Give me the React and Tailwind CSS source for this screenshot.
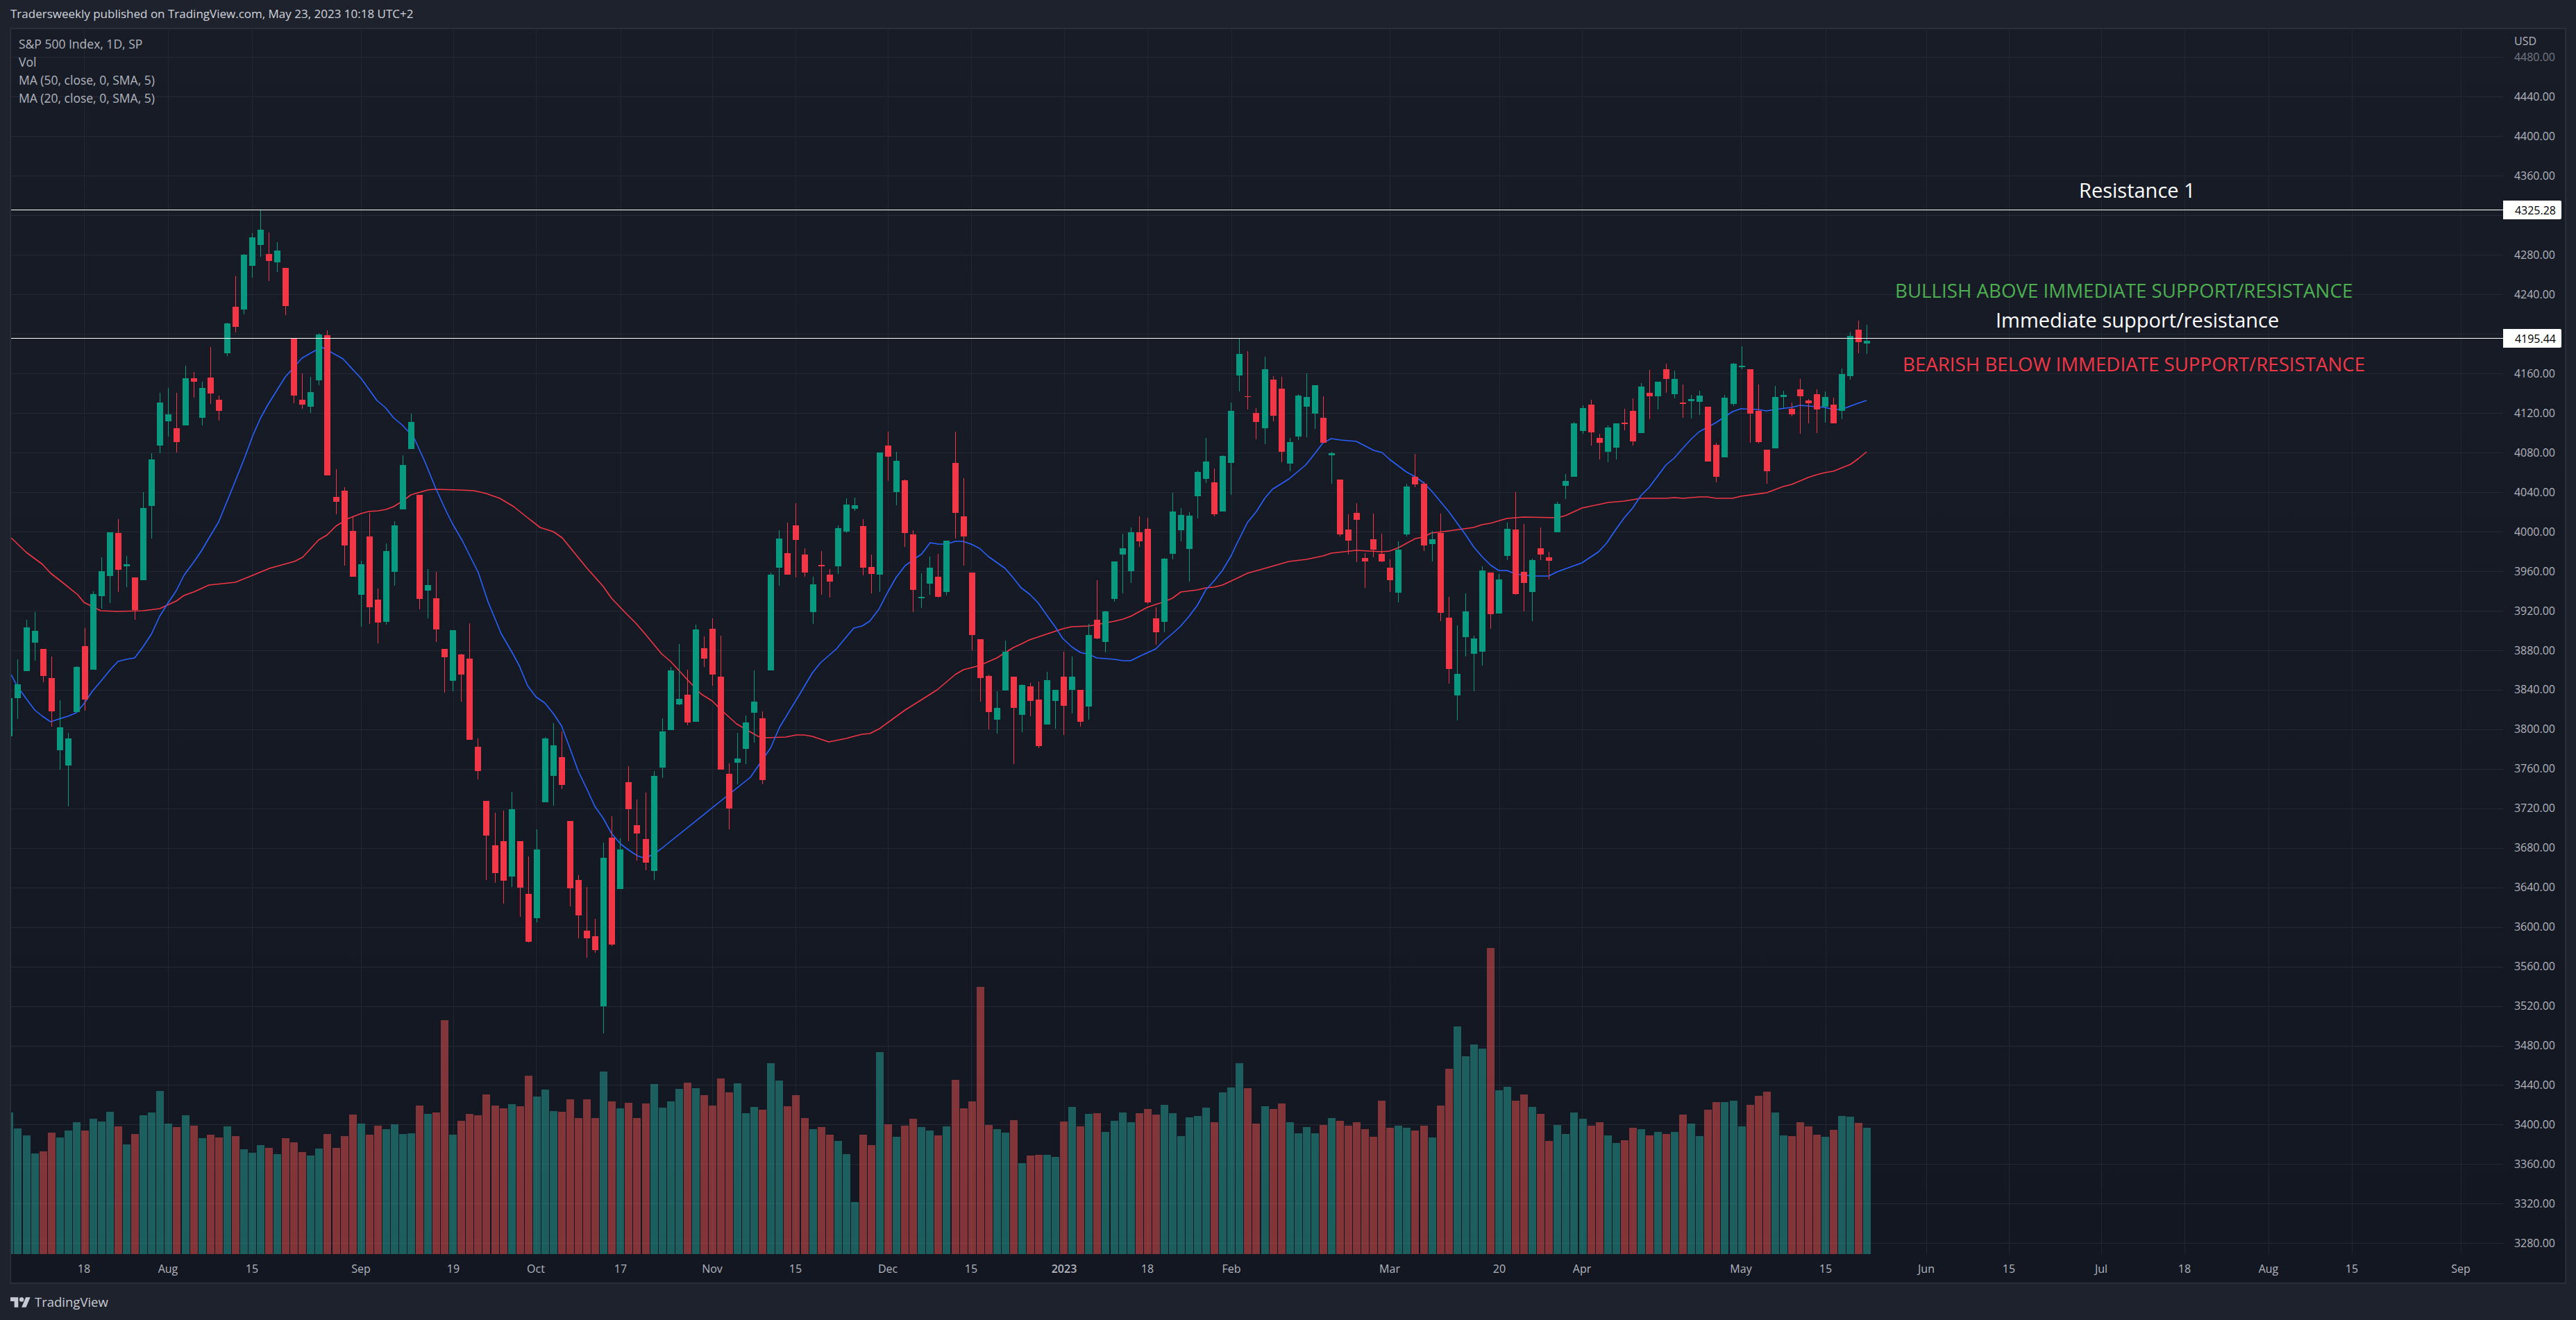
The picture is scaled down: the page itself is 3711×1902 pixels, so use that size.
import React from "react";

// [up, bodyTop, bodyBottom, wickTop, wickBottom, volumeTop] in page pixels
const CANDLES = [
  [1,1006,1061,1006,1061,1603],[1,986,1006,950,1036,1626],[1,904,967,893,967,1636],[1,909,926,882,952,1662],[0,935,974,935,983,1659],
  [0,977,1025,946,1047,1632],[1,1048,1081,1009,1109,1639],[1,1064,1103,1056,1162,1629],[1,961,1026,960,1026,1617],[0,931,1008,905,1024,1629],
  [1,856,965,852,965,1612],[1,823,859,803,877,1616],[1,767,830,767,869,1602],[0,768,821,748,853,1623],[1,813,816,801,846,1649],
  [0,832,879,832,893,1634],[1,732,836,709,836,1607],[1,662,729,653,776,1603],[1,580,642,566,653,1572],[1,597,607,559,629,1619],
  [0,617,637,566,652,1624],[1,545,613,527,613,1607],[0,545,550,536,573,1622],[1,559,602,550,613,1640],[0,544,567,500,582,1635],
  [0,576,592,570,606,1639],[1,466,509,465,513,1623],[0,442,471,398,479,1637],[1,367,446,366,453,1656],[1,342,383,336,400,1661],
  [1,331,353,302,370,1650],[0,366,376,335,405,1654],[1,361,378,349,392,1663],[0,386,441,386,454,1640],[0,488,570,488,581,1646],
  [0,576,583,538,589,1660],[1,565,586,543,595,1665],[1,482,548,480,555,1655],[0,483,685,476,685,1634],[0,716,723,676,741,1654],
  [0,707,786,702,815,1637],[0,765,831,745,831,1606],[1,813,857,808,903,1619],[0,773,875,739,899,1635],[0,864,897,848,927,1622],
  [1,794,896,783,900,1627],[1,757,824,751,844,1620],[1,670,734,656,734,1634],[1,608,647,596,647,1633],[0,713,863,713,878,1593],
  [1,843,851,820,891,1605],[0,862,907,824,925,1603],[0,935,947,935,998,1470],[1,908,981,908,996,1635],[0,943,972,942,1011,1615],
  [0,949,1066,898,1066,1605],[0,1076,1111,1064,1123,1607],[0,1154,1204,1154,1268,1577],[0,1218,1258,1171,1272,1593],[0,1212,1269,1168,1302,1597],
  [1,1166,1263,1141,1278,1591],[0,1212,1279,1212,1321,1594],[0,1288,1357,1234,1358,1550],[1,1224,1323,1195,1329,1580],[1,1064,1156,1062,1156,1570],
  [1,1074,1118,1042,1161,1601],[0,1091,1131,1054,1137,1602],[0,1183,1280,1183,1306,1584],[0,1268,1319,1261,1352,1611],[0,1341,1352,1278,1380,1584],
  [0,1349,1369,1324,1373,1611],[1,1236,1450,1214,1489,1544],[0,1207,1361,1176,1363,1587],[1,1224,1281,1208,1281,1597],[0,1127,1166,1104,1212,1589],
  [0,1189,1201,1152,1240,1611],[0,1209,1243,1142,1254,1590],[1,1118,1255,1111,1268,1562],[1,1054,1106,1035,1121,1596],[1,966,1052,961,1052,1587],
  [1,1007,1015,928,1016,1569],[0,1001,1041,965,1045,1560],[1,907,1040,900,1040,1568],[0,934,949,917,961,1578],[0,906,972,891,988,1593],
  [0,975,1109,916,1109,1554],[0,1115,1165,1100,1195,1574],[1,1093,1099,1056,1130,1561],[1,1041,1079,1031,1101,1604],[1,1011,1027,966,1070,1595],
  [0,1035,1124,1025,1130,1599],[1,828,966,825,966,1532],[1,776,818,764,844,1557],[0,797,828,753,828,1594],[0,757,778,725,832,1578],
  [0,799,825,790,831,1611],[1,842,882,831,899,1627],[0,814,816,794,857,1624],[0,828,838,820,861,1635],[1,761,816,757,827,1644],
  [1,727,766,718,768,1663],[1,728,733,717,736,1732],[0,758,818,748,829,1635],[0,817,827,799,855,1650],[1,652,828,652,853,1516],
  [0,642,658,622,693,1620],[1,664,709,651,728,1638],[0,692,768,691,788,1622],[0,770,850,764,882,1612],[1,860,862,826,876,1624],
  [1,818,841,802,857,1629],[0,831,860,798,861,1636],[1,779,853,779,858,1623],[0,667,739,622,776,1556],[0,744,773,689,815,1597],
  [0,825,915,825,937,1587],[0,921,977,921,1011,1422],[0,974,1026,972,1051,1621],[1,1020,1037,996,1057,1627],[1,939,995,923,995,1632],
  [0,975,1020,975,1101,1614],[1,987,1030,986,1055,1676],[0,989,1010,984,1032,1665],[0,1008,1075,982,1078,1664],[1,980,1044,968,1044,1664],
  [1,994,1010,994,1050,1667],[0,975,1017,939,1059,1616],[1,975,994,946,1028,1595],[0,994,1040,994,1047,1623],[1,915,1018,899,1037,1605],
  [0,893,920,836,921,1604],[1,881,925,880,940,1631],[1,809,863,809,867,1615],[1,790,799,769,855,1603],[1,767,823,760,840,1617],
  [0,767,780,744,788,1604],[0,762,868,746,870,1598],[0,891,911,875,929,1606],[1,805,896,804,911,1592],[1,737,798,710,806,1604],
  [1,742,764,732,780,1637],[1,743,791,738,838,1610],[1,680,715,678,747,1608],[1,665,690,631,696,1596],[0,695,741,675,744,1617],
  [1,657,737,656,737,1574],[1,592,667,580,713,1567],[1,510,541,488,564,1532],[0,571,572,506,590,1568],[0,595,608,588,633,1619],
  [1,532,617,514,640,1594],[0,547,599,542,607,1598],[0,560,651,543,666,1590],[1,637,668,631,679,1617],[1,570,629,568,634,1633],
  [1,572,586,538,630,1624],[1,555,596,555,618,1633],[0,602,638,571,638,1621],[1,653,656,651,697,1611],[0,691,770,691,773,1615],
  [0,763,779,741,799,1622],[0,739,749,725,810,1617],[0,804,809,797,847,1627],[0,777,792,740,803,1638],[0,798,809,769,810,1586],
  [0,818,836,806,853,1625],[1,792,854,780,868,1622],[1,701,770,697,773,1625],[0,687,698,654,702,1629],[0,697,786,694,794,1622],
  [1,777,784,765,809,1639],[0,768,883,740,895,1593],[0,890,964,860,985,1540],[1,971,1002,901,1038,1479],[1,881,918,855,946,1522],
  [1,920,942,916,996,1505],[1,822,939,816,959,1511],[0,825,885,825,906,1366],[1,835,884,827,884,1571],[1,762,801,753,807,1566],
  [0,763,856,709,857,1586],[0,824,840,755,881,1577],[1,807,853,805,895,1595],[0,790,799,760,807,1605],[0,803,808,795,835,1644],
  [1,726,767,723,767,1621],[1,693,700,683,719,1634],[1,610,687,608,687,1603],[1,588,621,584,625,1612],[0,583,623,576,642,1622],
  [0,631,638,625,662,1617],[1,616,651,613,666,1636],[1,610,645,610,662,1647],[0,609,611,589,620,1643],[0,592,636,574,642,1625],
  [1,557,624,552,624,1627],[0,566,571,533,604,1636],[1,550,571,550,590,1631],[0,532,546,524,566,1634],[1,546,568,534,574,1631],
  [0,580,582,554,602,1606],[1,575,578,569,603,1619],[1,570,579,563,598,1637],[0,586,665,586,665,1599],[0,641,687,638,695,1588],
  [1,573,659,569,659,1588],[1,524,582,523,585,1586],[1,527,529,499,532,1623],[0,532,596,532,638,1592],[0,592,637,554,639,1579],
  [0,648,679,648,697,1573],[1,572,646,556,646,1603],[1,569,572,563,588,1636],[0,589,597,580,600,1637],[0,561,571,546,625,1617],
  [0,577,581,575,610,1623],[0,568,590,561,624,1635],[1,572,586,564,609,1638],[0,583,610,573,610,1628],[1,539,592,531,604,1608],
  [1,484,542,478,547,1609],[0,475,493,462,509,1618],[1,491,495,468,510,1625],
];

const MA20 = "16,972 25,989 38,1007 50,1023 61,1032 73,1040 85,1036 98,1032 110,1027 121,1014 133,996 145,982 158,966 170,953 182,950 194,948 206,932 218,914 230,888 242,869 254,851 265,829 279,810 290,794 300,777 315,752 335,703 353,658 364,628 375,603 386,583 411,543 435,516 463,500 476,507 494,517 520,545 543,577 555,587 567,602 579,612 596,630 612,665 627,702 643,737 652,755 666,779 689,825 703,867 722,913 736,937 748,959 760,988 772,1004 785,1013 797,1028 809,1046 821,1078 833,1111 845,1136 857,1162 869,1179 881,1201 894,1216 906,1225 918,1233 930,1237 950,1225 1081,1120 1110,1078 1123,1048 1154,997 1170,970 1182,955 1205,935 1219,918 1230,905 1242,902 1253,895 1266,878 1279,853 1291,832 1304,815 1328,798 1340,782 1352,784 1364,784 1376,780 1387,780 1399,784 1411,790 1424,802 1448,819 1460,833 1471,847 1483,856 1495,868 1507,885 1520,903 1531,920 1544,932 1556,940 1569,943 1580,948 1605,950 1618,952 1629,952 1641,946 1665,935 1677,923 1689,913 1701,902 1713,888 1725,872 1737,850 1749,837 1761,822 1774,800 1780,787 1797,753 1810,737 1822,718 1833,705 1857,690 1881,670 1893,655 1906,638 1918,632 1931,634 1954,636 1979,649 1991,652 2002,662 2026,680 2039,687 2050,695 2062,707 2087,737 2111,770 2123,788 2135,802 2147,814 2159,822 2171,822 2183,827 2207,830 2231,830 2243,824 2279,811 2291,803 2303,795 2315,782 2327,764 2340,746 2352,732 2364,714 2376,702 2388,686 2400,670 2412,660 2425,645 2437,632 2448,622 2472,609 2484,601 2496,593 2508,589 2532,590 2545,592 2557,590 2581,587 2593,584 2605,585 2629,587 2641,590 2653,590 2666,585 2677,581 2689,577";

const MA50 = "16,775 38,796 61,813 73,826 91,840 112,857 121,868 145,880 170,881 206,880 230,877 254,866 265,858 279,853 301,843 339,839 364,829 388,819 424,809 436,803 459,778 471,771 484,758 502,747 520,740 531,737 545,736 556,734 567,730 580,722 592,713 616,706 627,705 661,706 683,707 700,711 720,718 740,730 760,746 778,760 797,766 810,775 845,818 869,845 881,862 900,882 916,898 929,913 953,942 966,953 989,978 1010,1000 1026,1010 1038,1022 1061,1043 1092,1061 1104,1063 1132,1062 1147,1059 1158,1059 1170,1061 1194,1069 1219,1064 1230,1061 1242,1058 1253,1057 1267,1050 1304,1023 1328,1008 1350,994 1376,972 1388,965 1411,959 1436,948 1460,933 1471,928 1483,922 1495,918 1531,906 1544,903 1569,902 1606,895 1618,892 1629,888 1653,875 1677,867 1689,862 1701,853 1725,850 1737,847 1749,846 1761,843 1774,837 1797,826 1822,819 1857,809 1882,806 1906,801 1918,797 1954,793 1991,795 2002,794 2015,789 2039,776 2050,774 2062,768 2087,765 2123,760 2135,756 2147,754 2171,747 2195,745 2243,746 2255,743 2279,732 2317,724 2340,722 2364,718 2400,718 2412,717 2425,718 2448,716 2460,716 2472,718 2496,718 2508,715 2545,710 2569,701 2581,698 2605,688 2617,684 2629,681 2641,679 2666,669 2677,661 2689,651";

const TICKS = [
  [121, "18"], [242, "Aug"], [363, "15"], [520, "Sep"], [653, "19"], [772, "Oct"], [894, "17"],
  [1026, "Nov"], [1146, "15"], [1279, "Dec"], [1399, "15"], [1533, "2023"], [1653, "18"], [1774, "Feb"],
  [2002, "Mar"], [2160, "20"], [2279, "Apr"], [2508, "May"], [2630, "15"], [2775, "Jun"], [2894, "15"],
  [3027, "Jul"], [3147, "18"], [3268, "Aug"], [3388, "15"], [3545, "Sep"],
];

const PRICES = Array.from({ length: 31 }, (_, i) => (4480 - i * 40).toFixed(2));

function PriceChart() {
  return (
    <svg className="absolute inset-0" width="3590" height="1765" viewBox="16 42 3590 1765" shapeRendering="crispEdges">
      {PRICES.map((p, i) => {
        const y = Math.round(82 + i * 56.98);
        return <rect key={p} x="16" y={y} width="3590" height="1" fill="#252934" />;
      })}
      {TICKS.map(([x, t]) => (
        <rect key={x} x={x} y="42" width="1" height="1765" fill="#22262f" />
      ))}
      {CANDLES.map((c, i) => {
        const x = Math.round(13.4 + 12.054 * i);
        return (
          <rect key={i} x={x - 5} y={c[5]} width="11" height={1807 - c[5]} fill={c[0] ? "#26a69a" : "#ef5350"} fillOpacity="0.5" />
        );
      })}
      <polyline points={MA50} fill="none" stroke="#f23645" strokeWidth="1.6" strokeLinejoin="round" shapeRendering="auto" />
      <polyline points={MA20} fill="none" stroke="#2962ff" strokeWidth="1.6" strokeLinejoin="round" shapeRendering="auto" />
      {CANDLES.map((c, i) => {
        const x = Math.round(13.4 + 12.054 * i);
        const color = c[0] ? "#089981" : "#f23645";
        return (
          <g key={i} fill={color}>
            <rect x={x} y={c[3]} width="1" height={c[4] - c[3]} />
            <rect x={x - 4} y={c[1]} width="9" height={c[2] - c[1]} />
          </g>
        );
      })}
      <rect x="16" y="302" width="3590" height="1" fill="#ffffff" />
      <rect x="16" y="487" width="3590" height="1" fill="#ffffff" />
    </svg>
  );
}

function Note({ className, children }) {
  return <div className={"absolute leading-[40px] whitespace-nowrap -translate-y-1/2 " + className}>{children}</div>;
}

function PriceTag({ className, children }) {
  return (
    <div className={"absolute left-0 w-[84px] h-[27px] bg-white text-black rounded-r-[2px] flex items-center justify-end pr-[8px] text-[16px] " + className}>
      {children}
    </div>
  );
}

export default function App() {
  return (
    <div className="w-[3711px] h-[1902px] flex flex-col bg-[#1e222d] font-['Open_Sans',sans-serif] overflow-hidden">
      <div className="h-[40px] flex items-center pl-[15px] text-[17px] text-[#d1d4dc]">
        Tradersweekly published on TradingView.com, May 23, 2023 10:18 UTC+2
      </div>

      <div className="ml-[14px] w-[3683px] h-[1810px] flex flex-col border-2 border-[#2a2e39] bg-linear-to-b from-[#181c27] to-[#131722]">
        <div className="flex h-[1765px]">
          <div className="relative w-[3590px]">
            <PriceChart />
            <div className="absolute left-[11px] top-[8px] flex flex-col text-[17.5px] leading-[26px] text-[#b2b5be]">
              <span>S&amp;P 500 Index, 1D, SP</span>
              <span>Vol</span>
              <span>MA (50, close, 0, SMA, 5)</span>
              <span>MA (20, close, 0, SMA, 5)</span>
            </div>
            <Note className="left-[2979px] top-[232px] text-[29px] text-white">Resistance 1</Note>
            <Note className="left-[2714px] top-[376px] text-[27.7px] text-[#4caf50]">BULLISH ABOVE IMMEDIATE SUPPORT/RESISTANCE</Note>
            <Note className="left-[2859px] top-[419px] text-[29px] text-white">Immediate support/resistance</Note>
            <Note className="left-[2725px] top-[482px] text-[27.7px] text-[#f23645]">BEARISH BELOW IMMEDIATE SUPPORT/RESISTANCE</Note>
          </div>

          <div className="relative flex-1 pt-[11.5px] flex flex-col text-[16px] text-[#b2b5be]">
            <span className="absolute left-[16px] top-[4px] leading-[26px]">USD</span>
            {PRICES.map((p, i) => (
              <div key={p} className={"h-[56.98px] shrink-0 flex items-center justify-end pr-[14px] " + (i === 0 ? "opacity-60" : "")}>
                {p}
              </div>
            ))}
            <PriceTag className="top-[247px]">4325.28</PriceTag>
            <PriceTag className="top-[432px]">4195.44</PriceTag>
          </div>
        </div>

        <div className="flex-1 flex items-center text-[16px] text-[#b2b5be]">
          {TICKS.map(([x, t], i) => (
            <div
              key={x}
              className={"w-0 flex justify-center " + (t === "2023" ? "font-semibold" : "")}
              style={{ marginLeft: i === 0 ? x - 16 : x - TICKS[i - 1][0] }}
            >
              {t}
            </div>
          ))}
        </div>
      </div>

      <div className="flex-1 flex items-center pl-[15px] gap-[6px] text-[#c8cad3]">
        <svg width="29" height="15" viewBox="0 4 36 18" fill="currentColor">
          <path d="M14 22H7V11H0V4h14v18ZM28 22h-8l7.5-18h8L28 22Z" />
          <circle cx="20" cy="8" r="4" />
        </svg>
        <span className="text-[18.5px]">TradingView</span>
      </div>
    </div>
  );
}
